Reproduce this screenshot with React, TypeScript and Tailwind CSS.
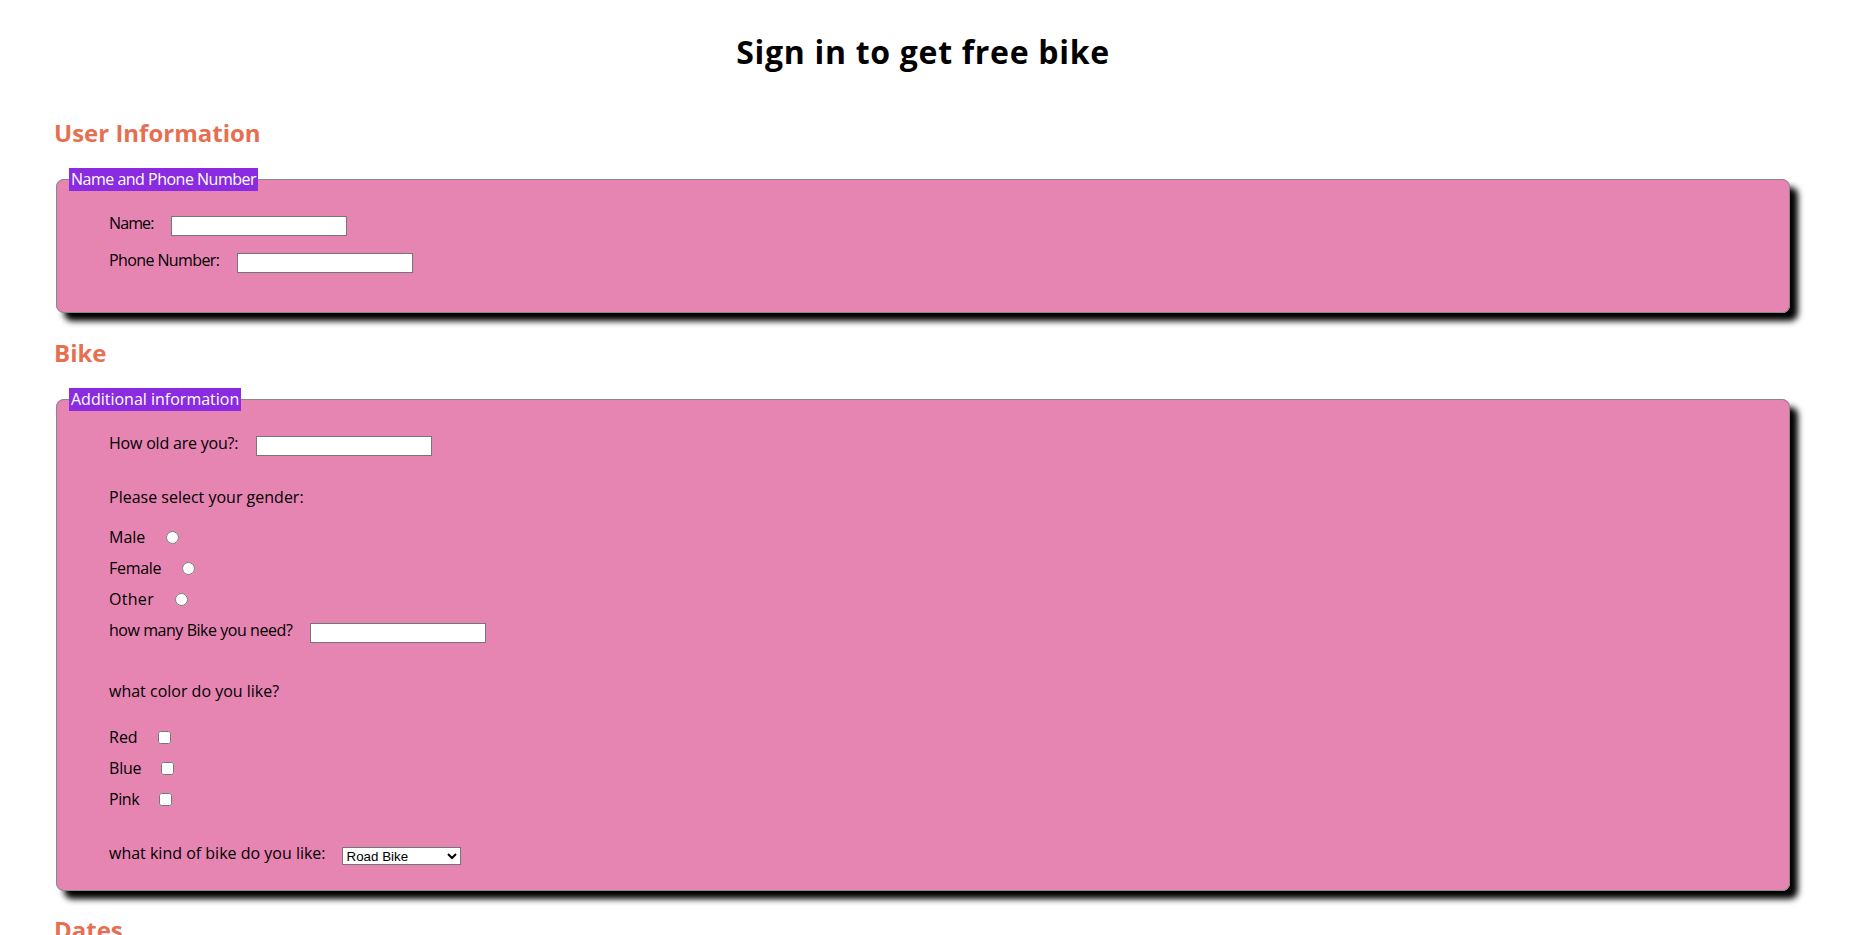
import { useState } from "react";

const Row = ({ children, className = "" }: { children: React.ReactNode; className?: string }) => (
  <div className={`ml-[40px] flex h-[20px] items-start ${className}`}>{children}</div>
);

const Label = ({ children, tight = "" }: { children: React.ReactNode; tight?: string }) => (
  <span className={`text-[16px] leading-[14px] whitespace-nowrap ${tight}`}>{children}</span>
);

const TextInput = ({ gap = "ml-[18px]" }: { gap?: string }) => (
  <input
    type="text"
    className={`${gap} h-[20px] w-[176px] border border-[#767676] bg-white px-[2px] font-['Liberation_Sans',sans-serif] text-[13px] outline-none`}
  />
);

const genders = [
  { name: "Male", tight: "" },
  { name: "Female", tight: "tracking-[-0.3px]" },
  { name: "Other", tight: "tracking-[0.3px]" },
];

const colors = [
  { name: "Red", tight: "" },
  { name: "Blue", tight: "tracking-[-0.2px]" },
  { name: "Pink", tight: "tracking-[-0.4px]" },
];

export default function App() {
  const [gender, setGender] = useState("");

  return (
    <div className="min-h-screen bg-white font-['Comic_Sans_MS','Open_Sans',sans-serif] text-black">
      <div className="ml-[54px] w-[1738px] pb-[60px]">
        <h1 className="pt-[36px] text-center text-[32px] leading-[32px] font-bold tracking-[0.7px]">
          Sign in to get free bike
        </h1>

        <h2 className="mt-[53px] text-[24px] leading-[24px] font-bold text-[#e76f51]">User Information</h2>
        <fieldset className="mx-[2px] mt-[23px] rounded-[8px] border border-[#888] bg-[#e785b2] px-[12px] pb-[39px] shadow-[8px_8px_6px_#000]">
          <legend className="bg-[#8a2be2] px-[2px] text-[16px] leading-[23px] tracking-[-0.5px] text-white">
            Name and Phone Number
          </legend>
          <Row className="mt-[25px]">
            <Label tight="tracking-[-0.9px]">Name:</Label>
            <TextInput />
          </Row>
          <Row className="mt-[17px]">
            <Label tight="tracking-[-0.6px]">Phone Number:</Label>
            <TextInput />
          </Row>
        </fieldset>

        <h2 className="mt-[28px] text-[24px] leading-[24px] font-bold text-[#e76f51]">Bike</h2>
        <fieldset className="mx-[2px] mt-[23px] rounded-[8px] border border-[#888] bg-[#e785b2] px-[12px] pb-[24px] shadow-[8px_8px_6px_#000]">
          <legend className="bg-[#8a2be2] px-[2px] text-[16px] leading-[23px] text-white">Additional information</legend>
          <Row className="mt-[25px]">
            <Label tight="tracking-[-0.2px]">How old are you?:</Label>
            <TextInput />
          </Row>
          <Row className="mt-[34px]">
            <Label>Please select your gender:</Label>
          </Row>
          {genders.map((g, i) => (
            <Row key={g.name} className={i === 0 ? "mt-[20px]" : "mt-[11px]"}>
              <Label tight={g.tight}>{g.name}</Label>
              <input
                type="radio"
                name="gender"
                checked={gender === g.name}
                onChange={() => setGender(g.name)}
                className="mt-[1px] ml-[21px] h-[13px] w-[13px]"
              />
            </Row>
          ))}
          <Row className="mt-[11px]">
            <Label tight="tracking-[-0.45px]">how many Bike you need?</Label>
            <TextInput />
          </Row>
          <Row className="mt-[41px]">
            <Label>what color do you like?</Label>
          </Row>
          {colors.map((c, i) => (
            <Row key={c.name} className={i === 0 ? "mt-[26px]" : "mt-[11px]"}>
              <Label tight={c.tight}>{c.name}</Label>
              <input type="checkbox" className="mt-[1px] ml-[20px] h-[13px] w-[13px]" />
            </Row>
          ))}
          <Row className="mt-[34px]">
            <Label>what kind of bike do you like:</Label>
            <select className="mt-[1px] ml-[16px] h-[18px] w-[119px] border border-[#767676] bg-white font-['Liberation_Sans',sans-serif] text-[13.33px] leading-[16px] text-black">
              <option>Road Bike</option>
              <option>Mountain Bike</option>
              <option>City Bike</option>
              <option>Electric Bike</option>
            </select>
          </Row>
        </fieldset>

        <h2 className="mt-[27px] text-[24px] leading-[24px] font-bold text-[#e76f51]">Dates</h2>
        <fieldset className="mx-[2px] mt-[23px] rounded-[8px] border border-[#888] bg-[#e785b2] px-[12px] pb-[24px] shadow-[8px_8px_6px_#000]">
          <legend className="bg-[#8a2be2] px-[2px] text-[16px] leading-[23px] text-white">Pick up and return</legend>
          <Row className="mt-[25px]">
            <Label>Pick up date:</Label>
            <TextInput />
          </Row>
          <Row className="mt-[17px]">
            <Label>Return date:</Label>
            <TextInput />
          </Row>
        </fieldset>
      </div>
    </div>
  );
}
